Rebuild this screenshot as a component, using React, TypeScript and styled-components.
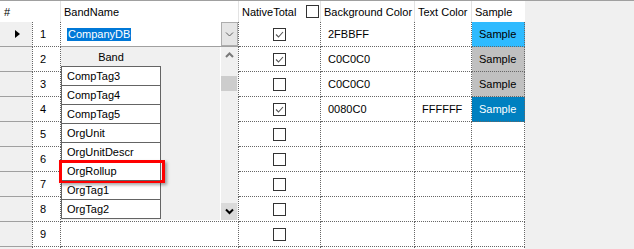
import React from "react";
import styled, { createGlobalStyle } from "styled-components";

const GlobalStyle = createGlobalStyle`
  html, body { margin: 0; padding: 0; background: #f0f0f0; }
  body {
    font-family: "Liberation Sans", Arial, sans-serif;
    font-size: 11px;
    color: #000;
  }
`;

const COLS = "32px 29px 178px 82px 94px 57px 53px";
const DOT = "1px dotted #666";

interface RowData {
    band: string;
    native: boolean;
    bg: string;
    fg: string;
}

const rows: RowData[] = [
    { band: "CompanyDB", native: true, bg: "2FBBFF", fg: "" },
    { band: "", native: true, bg: "C0C0C0", fg: "" },
    { band: "", native: false, bg: "C0C0C0", fg: "" },
    { band: "", native: true, bg: "0080C0", fg: "FFFFFF" },
    { band: "", native: false, bg: "", fg: "" },
    { band: "", native: false, bg: "", fg: "" },
    { band: "", native: false, bg: "", fg: "" },
    { band: "", native: false, bg: "", fg: "" },
    { band: "", native: false, bg: "", fg: "" },
];

const bands = ["CompTag3", "CompTag4", "CompTag5", "OrgUnit", "OrgUnitDescr", "OrgRollup", "OrgTag1", "OrgTag2"];

const Frame = styled.div`
    width: 634px;
    height: 249px;
    box-sizing: border-box;
    border-top: 1px solid #a0a0a0;
    background: #f0f0f0;
    overflow: hidden;
`

const Grid = styled.div`
    width: 525px;
`

const HeaderRow = styled.div`
    display: grid;
    grid-template-columns: ${COLS};
    height: 21px;
    background: #fff;
`

const HeadCell = styled.div<{ $span?: number; $spread?: boolean }>`
    grid-column: span ${p => p.$span || 1};
    box-sizing: border-box;
    display: flex;
    align-items: center;
    justify-content: ${p => p.$spread ? "space-between" : "flex-start"};
    padding: 0 1px 0 ${p => p.$span === 2 ? 4 : 3}px;
    border-right: 1px solid #e3e3e3;
    white-space: nowrap;
    overflow: hidden;
    &:last-child { border-right: none; }
`

const Row = styled.div`
    display: grid;
    grid-template-columns: ${COLS};
    height: 25px;
`

const RowHeader = styled.div`
    box-sizing: border-box;
    background: #f0f0f0;
    border-bottom: 1px solid #a0a0a0;
    display: flex;
    align-items: center;
    padding-left: 15px;
`

const Arrow = styled.span`
    width: 0;
    height: 0;
    border-left: 5px solid #000;
    border-top: 4px solid transparent;
    border-bottom: 4px solid transparent;
`

const Cell = styled.div<{ $bg?: string; $fg?: string; $center?: boolean; $left?: boolean; $pad?: number }>`
    box-sizing: border-box;
    position: relative;
    background: ${p => p.$bg || "#fff"};
    color: ${p => p.$fg || "#000"};
    border-right: ${DOT};
    border-bottom: ${DOT};
    border-left: ${p => p.$left ? DOT : "none"};
    display: flex;
    align-items: center;
    justify-content: ${p => p.$center ? "center" : "flex-start"};
    padding-left: ${p => p.$center ? 0 : (p.$pad ?? 6)}px;
    white-space: nowrap;
`

const Box = styled.span`
    box-sizing: border-box;
    width: 13px;
    height: 13px;
    border: 1px solid #333;
    background: #fff;
    display: inline-flex;
    align-items: center;
    justify-content: center;
`

const Editor = styled.div`
    display: flex;
    align-items: center;
    width: 100%;
    height: 100%;
`

const Selected = styled.span`
    background: #0078d7;
    color: #fff;
    line-height: 13px;
    padding: 0 1px;
`

const DropButton = styled.div`
    box-sizing: border-box;
    margin-left: auto;
    width: 17px;
    height: 100%;
    background: #e5e5e5;
    border: 1px solid #adadad;
    display: flex;
    align-items: center;
    justify-content: center;
`

const Panel = styled.div`
    position: absolute;
    top: 100%;
    left: 0;
    width: 177px;
    height: 174px;
    box-sizing: border-box;
    border-top: 1px solid #a0a0a0;
    background: #f0f0f0;
    display: flex;
    z-index: 2;
`

const List = styled.div`
    width: 100px;
    display: flex;
    flex-direction: column;
`

const ListHead = styled.div`
    height: 19px;
    display: flex;
    align-items: center;
    justify-content: center;
`

const Items = styled.div`
    border-left: 1px solid #646464;
    border-right: 1px solid #646464;
    border-bottom: 1px solid #646464;
    background: #fff;
`

const Item = styled.div`
    position: relative;
    box-sizing: border-box;
    height: 19px;
    border-top: 1px solid #646464;
    padding-left: 5px;
    display: flex;
    align-items: center;
`

const Highlight = styled.span`
    position: absolute;
    left: -3px;
    top: -2px;
    width: 106px;
    height: 23px;
    box-sizing: border-box;
    border: 3px solid #ff0000;
    box-shadow: 2px 2px 3px rgba(0, 0, 0, 0.35);
`

const Gap = styled.div`
    flex: 1;
    border-right: 1px solid #fff;
`

const ScrollBar = styled.div`
    width: 17px;
    display: flex;
    flex-direction: column;
`

const ScrollBtn = styled.div<{ $hover?: boolean }>`
    height: 17px;
    width: 16px;
    background: ${p => p.$hover ? "#dadada" : "transparent"};
    display: flex;
    align-items: center;
    justify-content: center;
`

const Thumb = styled.div`
    margin-top: 12px;
    width: 16px;
    height: 15px;
    background: #cdcdcd;
`

const Track = styled.div`
    flex: 1;
`

function Check(props: { on: boolean }) {
    return (
        <Box>
            {props.on && (
                <svg width="11" height="11" viewBox="0 0 11 11">
                    <polyline points="2,5.5 4.5,8 9,3" fill="none" stroke="#555" strokeWidth="1.1" />
                </svg>
            )}
        </Box>
    );
}

function Chevron(props: { up?: boolean; bold?: boolean; color?: string }) {
    const pts = props.up ? "1,5 4.5,1.5 8,5" : "1,1.5 4.5,5 8,1.5";
    return (
        <svg width="9" height="7" viewBox="0 0 9 7">
            <polyline points={pts} fill="none" stroke={props.color || "#606060"} strokeWidth={props.bold ? 2 : 1} />
        </svg>
    );
}

function BandDropdown() {
    return (
        <>
            <Editor>
                <Selected>CompanyDB</Selected>
                <DropButton><Chevron /></DropButton>
            </Editor>
            <Panel>
                <List>
                    <ListHead>Band</ListHead>
                    <Items>
                        {bands.map(b => (
                            <Item key={b}>
                                {b}
                                {b === "OrgRollup" && <Highlight />}
                            </Item>
                        ))}
                    </Items>
                </List>
                <Gap />
                <ScrollBar>
                    <ScrollBtn><Chevron up bold color="#7a7a7a" /></ScrollBtn>
                    <Thumb />
                    <Track />
                    <ScrollBtn $hover><Chevron bold color="#000" /></ScrollBtn>
                </ScrollBar>
            </Panel>
        </>
    );
}

export default function App() {
    return (
        <Frame>
            <GlobalStyle />
            <Grid>
                <HeaderRow>
                    <HeadCell $span={2}>#</HeadCell>
                    <HeadCell>BandName</HeadCell>
                    <HeadCell $spread>NativeTotal <Check on={false} /></HeadCell>
                    <HeadCell>Background Color</HeadCell>
                    <HeadCell>Text Color</HeadCell>
                    <HeadCell>Sample</HeadCell>
                </HeaderRow>
                {rows.map((r, i) => (
                    <Row key={i}>
                        <RowHeader>{i === 0 && <Arrow />}</RowHeader>
                        <Cell $left $pad={7}>{i + 1}</Cell>
                        <Cell>{i === 0 ? <BandDropdown /> : r.band}</Cell>
                        <Cell $center><Check on={r.native} /></Cell>
                        <Cell $pad={7}>{r.bg}</Cell>
                        <Cell $pad={7}>{r.fg}</Cell>
                        <Cell $pad={7} $bg={r.bg ? `#${r.bg}` : undefined} $fg={r.fg ? `#${r.fg}` : undefined}>
                            {r.bg ? "Sample" : ""}
                        </Cell>
                    </Row>
                ))}
                <Row>
                    <RowHeader />
                    <Cell $left />
                    <Cell />
                    <Cell />
                    <Cell />
                    <Cell />
                    <Cell />
                </Row>
            </Grid>
        </Frame>
    );
}
